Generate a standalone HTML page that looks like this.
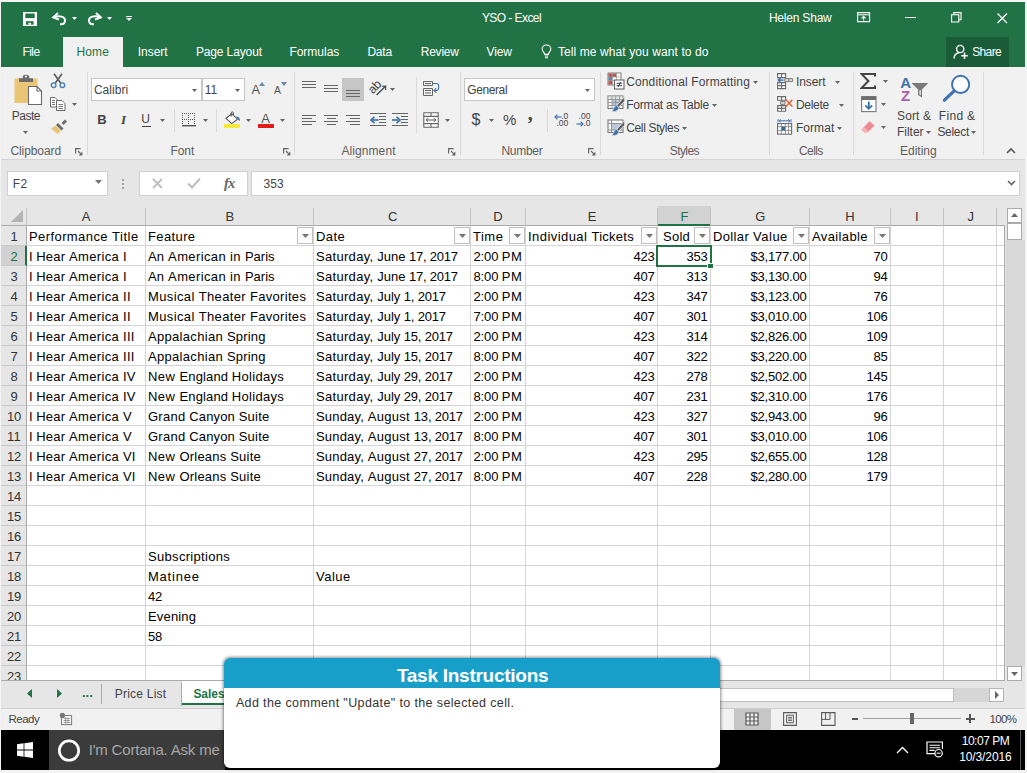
<!DOCTYPE html>
<html lang="en"><head><meta charset="utf-8"><title>YSO - Excel</title><style>
html,body{margin:0;padding:0}
body{width:1027px;height:773px;position:relative;overflow:hidden;background:#e6e6e6;font-family:"Liberation Sans",Arial,sans-serif}
.a{position:absolute;display:block}
.t{position:absolute;white-space:pre;line-height:20px;height:20px}
</style></head>
<body>
<div class="a" style="left:0px;top:0px;width:1027px;height:773px;background:#f4f4f4;"></div>
<div class="a" style="left:1px;top:2px;width:1024px;height:65px;background:#217346;"></div>
<div class="a" style="left:1px;top:67px;width:1024px;height:93px;background:#f1f1f1;"></div>
<div class="a" style="left:1px;top:159px;width:1024px;height:1px;background:#d4d4d4;"></div>
<div class="a" style="left:1px;top:160px;width:1024px;height:46px;background:#e6e6e6;"></div>
<div class="a" style="left:1px;top:206px;width:1024px;height:475px;background:#e6e6e6;"></div>
<div class="a" style="left:1px;top:681px;width:1024px;height:28px;background:#e6e6e6;"></div>
<div class="a" style="left:1px;top:709px;width:1024px;height:21px;background:#f1f1f1;"></div>
<div class="a" style="left:1px;top:708.3px;width:1024px;height:1px;background:#cfcfcf;"></div>
<div class="a" style="left:1px;top:730px;width:1024px;height:40px;background:#000;"></div>
<div class="a" style="left:1020px;top:730px;width:1px;height:40px;background:#555;"></div>
<span class="t" style="left:481.90px;top:8.00px;font-size:12px;color:#fff;letter-spacing:-0.560px;">YSO - Excel</span>
<span class="t" style="left:768.90px;top:8.00px;font-size:12px;color:#fff;letter-spacing:-0.202px;">Helen Shaw</span>
<div class="a" style="left:63px;top:37px;width:60px;height:31px;background:#f1f1f1;"></div>
<span class="t" style="left:22.40px;top:42.00px;font-size:12px;color:#fff;letter-spacing:-0.536px;">File</span>
<span class="t" style="left:76.40px;top:42.00px;font-size:12px;color:#217346;letter-spacing:0.146px;">Home</span>
<span class="t" style="left:137.70px;top:42.00px;font-size:12px;color:#fff;letter-spacing:-0.019px;">Insert</span>
<span class="t" style="left:195.90px;top:42.00px;font-size:12px;color:#fff;letter-spacing:-0.126px;">Page Layout</span>
<span class="t" style="left:289.40px;top:42.00px;font-size:12px;color:#fff;letter-spacing:-0.014px;">Formulas</span>
<span class="t" style="left:367.40px;top:42.00px;font-size:12px;color:#fff;letter-spacing:-0.190px;">Data</span>
<span class="t" style="left:420.70px;top:42.00px;font-size:12px;color:#fff;letter-spacing:-0.210px;">Review</span>
<span class="t" style="left:486.40px;top:42.00px;font-size:12px;color:#fff;letter-spacing:-0.049px;">View</span>
<span class="t" style="left:557.90px;top:42.00px;font-size:12px;color:#fff;letter-spacing:0.097px;">Tell me what you want to do</span>
<div class="a" style="left:946px;top:37px;width:63px;height:30px;background:#1a5c38;"></div>
<span class="t" style="left:972.20px;top:42.00px;font-size:12px;color:#fff;letter-spacing:-0.626px;">Share</span>
<div class="a" style="left:87px;top:72px;width:1px;height:83px;background:#dadada;"></div>
<div class="a" style="left:293.5px;top:72px;width:1px;height:83px;background:#dadada;"></div>
<div class="a" style="left:459.5px;top:72px;width:1px;height:83px;background:#dadada;"></div>
<div class="a" style="left:599.5px;top:72px;width:1px;height:83px;background:#dadada;"></div>
<div class="a" style="left:769px;top:72px;width:1px;height:83px;background:#dadada;"></div>
<div class="a" style="left:853px;top:72px;width:1px;height:83px;background:#dadada;"></div>
<div class="a" style="left:983px;top:72px;width:1px;height:83px;background:#dadada;"></div>
<span class="t" style="left:10.40px;top:141.00px;font-size:12px;color:#5e5e5e;letter-spacing:-0.075px;">Clipboard</span>
<span class="t" style="left:170.40px;top:141.00px;font-size:12px;color:#5e5e5e;letter-spacing:-0.029px;">Font</span>
<span class="t" style="left:341.40px;top:141.00px;font-size:12px;color:#5e5e5e;letter-spacing:0.092px;">Alignment</span>
<span class="t" style="left:501.40px;top:141.00px;font-size:12px;color:#5e5e5e;letter-spacing:-0.281px;">Number</span>
<span class="t" style="left:669.80px;top:141.00px;font-size:12px;color:#5e5e5e;letter-spacing:-0.598px;">Styles</span>
<span class="t" style="left:799.00px;top:141.00px;font-size:12px;color:#5e5e5e;letter-spacing:-0.594px;">Cells</span>
<span class="t" style="left:900.00px;top:141.00px;font-size:12px;color:#5e5e5e;">Editing</span>
<span class="t" style="left:11.70px;top:106.00px;font-size:12px;color:#444;letter-spacing:-0.478px;">Paste</span>
<svg class="a" style="left:23.0px;top:130.5px" width="5" height="3" viewBox="0 0 5 3"><path d="M0 0H5L2.5 3Z" fill="#666"/></svg>
<svg class="a" style="left:72.0px;top:102.5px" width="5" height="3" viewBox="0 0 5 3"><path d="M0 0H5L2.5 3Z" fill="#666"/></svg>
<div class="a" style="left:91px;top:78px;width:111px;height:23px;background:#fff;border:1px solid #c6c6c6;box-sizing:border-box;"></div>
<div class="a" style="left:202px;top:78px;width:43px;height:23px;background:#fff;border:1px solid #c6c6c6;box-sizing:border-box;"></div>
<span class="t" style="left:93.90px;top:80.00px;font-size:12px;color:#444;letter-spacing:0.055px;">Calibri</span>
<span class="t" style="left:204.70px;top:80.00px;font-size:12px;color:#444;">11</span>
<svg class="a" style="left:192.0px;top:89.0px" width="5" height="3" viewBox="0 0 5 3"><path d="M0 0H5L2.5 3Z" fill="#666"/></svg>
<svg class="a" style="left:235.0px;top:89.0px" width="5" height="3" viewBox="0 0 5 3"><path d="M0 0H5L2.5 3Z" fill="#666"/></svg>
<span class="t" style="left:97.20px;top:110.00px;font-size:13px;color:#444;font-weight:bold;letter-spacing:-0.791px;">B</span>
<span class="t" style="left:120.90px;top:110.00px;font-size:13px;color:#444;font-weight:bold;font-style:italic;font-family:'Liberation Serif', serif;letter-spacing:1.638px;">I</span>
<span class="t" style="left:141.20px;top:109.00px;font-size:12px;color:#444;letter-spacing:0.728px;">U</span>
<div class="a" style="left:141.5px;top:125.6px;width:9px;height:1.1px;background:#444;"></div>
<svg class="a" style="left:159.5px;top:119.0px" width="5" height="3" viewBox="0 0 5 3"><path d="M0 0H5L2.5 3Z" fill="#666"/></svg>
<div class="a" style="left:173.5px;top:109px;width:1px;height:23px;background:#dadada;"></div>
<svg class="a" style="left:202.5px;top:119.0px" width="5" height="3" viewBox="0 0 5 3"><path d="M0 0H5L2.5 3Z" fill="#666"/></svg>
<div class="a" style="left:216px;top:109px;width:1px;height:23px;background:#dadada;"></div>
<svg class="a" style="left:246.0px;top:119.0px" width="5" height="3" viewBox="0 0 5 3"><path d="M0 0H5L2.5 3Z" fill="#666"/></svg>
<svg class="a" style="left:280.0px;top:119.0px" width="5" height="3" viewBox="0 0 5 3"><path d="M0 0H5L2.5 3Z" fill="#666"/></svg>
<div class="a" style="left:342px;top:78px;width:22px;height:23px;background:#c6c6c6;"></div>
<svg class="a" style="left:390.0px;top:87.8px" width="5" height="3" viewBox="0 0 5 3"><path d="M0 0H5L2.5 3Z" fill="#666"/></svg>
<div class="a" style="left:415.5px;top:77px;width:1px;height:56px;background:#dadada;"></div>
<svg class="a" style="left:445.0px;top:119.0px" width="5" height="3" viewBox="0 0 5 3"><path d="M0 0H5L2.5 3Z" fill="#666"/></svg>
<div class="a" style="left:464px;top:78px;width:131px;height:23px;background:#fff;border:1px solid #c6c6c6;box-sizing:border-box;"></div>
<span class="t" style="left:467.20px;top:80.00px;font-size:12px;color:#444;letter-spacing:-0.386px;">General</span>
<svg class="a" style="left:585.0px;top:89.0px" width="5" height="3" viewBox="0 0 5 3"><path d="M0 0H5L2.5 3Z" fill="#666"/></svg>
<span class="t" style="left:471.40px;top:110.00px;font-size:16px;color:#444;letter-spacing:-0.206px;">$</span>
<svg class="a" style="left:489.0px;top:119.0px" width="5" height="3" viewBox="0 0 5 3"><path d="M0 0H5L2.5 3Z" fill="#666"/></svg>
<span class="t" style="left:502.90px;top:110.00px;font-size:15px;color:#444;letter-spacing:0.356px;">%</span>
<span class="t" style="left:527.70px;top:103.00px;font-size:20px;color:#444;font-weight:bold;font-family:'Liberation Serif', serif;letter-spacing:0.400px;">,</span>
<div class="a" style="left:546.5px;top:109px;width:1px;height:23px;background:#dadada;"></div>
<span class="t" style="left:626.20px;top:72.00px;font-size:12px;color:#444;letter-spacing:0.139px;">Conditional Formatting</span>
<svg class="a" style="left:753.0px;top:81.0px" width="5" height="3" viewBox="0 0 5 3"><path d="M0 0H5L2.5 3Z" fill="#666"/></svg>
<span class="t" style="left:626.20px;top:94.70px;font-size:12px;color:#444;letter-spacing:-0.202px;">Format as Table</span>
<svg class="a" style="left:711.5px;top:103.5px" width="5" height="3" viewBox="0 0 5 3"><path d="M0 0H5L2.5 3Z" fill="#666"/></svg>
<span class="t" style="left:626.20px;top:117.50px;font-size:12px;color:#444;letter-spacing:-0.344px;">Cell Styles</span>
<svg class="a" style="left:681.5px;top:126.5px" width="5" height="3" viewBox="0 0 5 3"><path d="M0 0H5L2.5 3Z" fill="#666"/></svg>
<span class="t" style="left:795.90px;top:72.00px;font-size:12px;color:#444;letter-spacing:-0.069px;">Insert</span>
<svg class="a" style="left:834.8px;top:81.0px" width="5" height="3" viewBox="0 0 5 3"><path d="M0 0H5L2.5 3Z" fill="#666"/></svg>
<span class="t" style="left:795.90px;top:94.70px;font-size:12px;color:#444;letter-spacing:-0.265px;">Delete</span>
<svg class="a" style="left:838.5px;top:103.5px" width="5" height="3" viewBox="0 0 5 3"><path d="M0 0H5L2.5 3Z" fill="#666"/></svg>
<span class="t" style="left:795.90px;top:117.50px;font-size:12px;color:#444;letter-spacing:0.064px;">Format</span>
<svg class="a" style="left:836.5px;top:126.5px" width="5" height="3" viewBox="0 0 5 3"><path d="M0 0H5L2.5 3Z" fill="#666"/></svg>
<svg class="a" style="left:882.7px;top:79.5px" width="5" height="3" viewBox="0 0 5 3"><path d="M0 0H5L2.5 3Z" fill="#666"/></svg>
<svg class="a" style="left:880.8px;top:102.5px" width="5" height="3" viewBox="0 0 5 3"><path d="M0 0H5L2.5 3Z" fill="#666"/></svg>
<svg class="a" style="left:880.8px;top:126.0px" width="5" height="3" viewBox="0 0 5 3"><path d="M0 0H5L2.5 3Z" fill="#666"/></svg>
<span class="t" style="left:897.00px;top:105.50px;font-size:12px;color:#444;letter-spacing:0.123px;">Sort &amp;</span>
<span class="t" style="left:897.00px;top:121.80px;font-size:12px;color:#444;letter-spacing:-0.029px;">Filter</span>
<svg class="a" style="left:925.8px;top:130.8px" width="5" height="3" viewBox="0 0 5 3"><path d="M0 0H5L2.5 3Z" fill="#666"/></svg>
<span class="t" style="left:938.80px;top:105.50px;font-size:12px;color:#444;letter-spacing:0.319px;">Find &amp;</span>
<span class="t" style="left:937.40px;top:121.80px;font-size:12px;color:#444;letter-spacing:-0.293px;">Select</span>
<svg class="a" style="left:971.0px;top:130.8px" width="5" height="3" viewBox="0 0 5 3"><path d="M0 0H5L2.5 3Z" fill="#666"/></svg>
<div class="a" style="left:6.5px;top:170.5px;width:101px;height:25.5px;background:#fff;border:1px solid #d0d0d0;box-sizing:border-box;"></div>
<span class="t" style="left:12.70px;top:173.50px;font-size:12px;color:#444;letter-spacing:0.392px;">F2</span>
<svg class="a" style="left:94.5px;top:180.0px" width="7" height="4" viewBox="0 0 7 4"><path d="M0 0H7L3.5 4Z" fill="#777"/></svg>
<div class="a" style="left:122.3px;top:178.5px;width:2px;height:2px;background:#a6a6a6;"></div>
<div class="a" style="left:122.3px;top:182.5px;width:2px;height:2px;background:#a6a6a6;"></div>
<div class="a" style="left:122.3px;top:186.5px;width:2px;height:2px;background:#a6a6a6;"></div>
<div class="a" style="left:138.5px;top:170.5px;width:109.5px;height:25.5px;background:#fff;border:1px solid #d0d0d0;box-sizing:border-box;"></div>
<div class="a" style="left:251px;top:170.5px;width:769px;height:25.5px;background:#fff;border:1px solid #d0d0d0;box-sizing:border-box;"></div>
<span class="t" style="left:263.40px;top:173.50px;font-size:12px;color:#444;letter-spacing:0.190px;">353</span>
<span class="t" style="left:223.90px;top:172.50px;font-size:14.5px;color:#666;font-weight:bold;font-style:italic;font-family:'Liberation Serif', serif;letter-spacing:-0.597px;">fx</span>
<svg class="a" style="left:151.5px;top:177.5px" width="11" height="11" viewBox="0 0 11 11"><path d="M1 1L10 10M10 1L1 10" stroke="#bdbdbd" stroke-width="1.8" fill="none"/></svg>
<svg class="a" style="left:186.5px;top:177px" width="14" height="12" viewBox="0 0 14 12"><path d="M1 6.5L5 10.5L13 1.5" stroke="#bdbdbd" stroke-width="2" fill="none"/></svg>
<svg class="a" style="left:1006.5px;top:180px" width="9" height="6" viewBox="0 0 9 6"><path d="M1 1L4.5 4.5L8 1" stroke="#666" stroke-width="1.6" fill="none"/></svg>
<div class="a" style="left:26px;top:226px;width:978px;height:454.5px;background:#fff;"></div>
<div class="a" style="left:26px;top:245px;width:978px;height:1px;background:#d4d4d4;"></div>
<div class="a" style="left:26px;top:265px;width:978px;height:1px;background:#d4d4d4;"></div>
<div class="a" style="left:26px;top:285px;width:978px;height:1px;background:#d4d4d4;"></div>
<div class="a" style="left:26px;top:305px;width:978px;height:1px;background:#d4d4d4;"></div>
<div class="a" style="left:26px;top:325px;width:978px;height:1px;background:#d4d4d4;"></div>
<div class="a" style="left:26px;top:345px;width:978px;height:1px;background:#d4d4d4;"></div>
<div class="a" style="left:26px;top:365px;width:978px;height:1px;background:#d4d4d4;"></div>
<div class="a" style="left:26px;top:385px;width:978px;height:1px;background:#d4d4d4;"></div>
<div class="a" style="left:26px;top:405px;width:978px;height:1px;background:#d4d4d4;"></div>
<div class="a" style="left:26px;top:425px;width:978px;height:1px;background:#d4d4d4;"></div>
<div class="a" style="left:26px;top:445px;width:978px;height:1px;background:#d4d4d4;"></div>
<div class="a" style="left:26px;top:465px;width:978px;height:1px;background:#d4d4d4;"></div>
<div class="a" style="left:26px;top:485px;width:978px;height:1px;background:#d4d4d4;"></div>
<div class="a" style="left:26px;top:505px;width:978px;height:1px;background:#d4d4d4;"></div>
<div class="a" style="left:26px;top:525px;width:978px;height:1px;background:#d4d4d4;"></div>
<div class="a" style="left:26px;top:545px;width:978px;height:1px;background:#d4d4d4;"></div>
<div class="a" style="left:26px;top:565px;width:978px;height:1px;background:#d4d4d4;"></div>
<div class="a" style="left:26px;top:585px;width:978px;height:1px;background:#d4d4d4;"></div>
<div class="a" style="left:26px;top:605px;width:978px;height:1px;background:#d4d4d4;"></div>
<div class="a" style="left:26px;top:625px;width:978px;height:1px;background:#d4d4d4;"></div>
<div class="a" style="left:26px;top:645px;width:978px;height:1px;background:#d4d4d4;"></div>
<div class="a" style="left:26px;top:665px;width:978px;height:1px;background:#d4d4d4;"></div>
<div class="a" style="left:145px;top:226px;width:1px;height:454.5px;background:#d4d4d4;"></div>
<div class="a" style="left:313px;top:226px;width:1px;height:454.5px;background:#d4d4d4;"></div>
<div class="a" style="left:470px;top:226px;width:1px;height:454.5px;background:#d4d4d4;"></div>
<div class="a" style="left:525px;top:226px;width:1px;height:454.5px;background:#d4d4d4;"></div>
<div class="a" style="left:657px;top:226px;width:1px;height:454.5px;background:#d4d4d4;"></div>
<div class="a" style="left:710px;top:226px;width:1px;height:454.5px;background:#d4d4d4;"></div>
<div class="a" style="left:809px;top:226px;width:1px;height:454.5px;background:#d4d4d4;"></div>
<div class="a" style="left:890px;top:226px;width:1px;height:454.5px;background:#d4d4d4;"></div>
<div class="a" style="left:943px;top:226px;width:1px;height:454.5px;background:#d4d4d4;"></div>
<div class="a" style="left:996px;top:226px;width:1px;height:454.5px;background:#d4d4d4;"></div>
<div class="a" style="left:1004px;top:225px;width:1px;height:455.5px;background:#ababab;"></div>
<div class="a" style="left:1px;top:206px;width:1003px;height:20px;background:#e6e6e6;"></div>
<div class="a" style="left:657.5px;top:206px;width:53px;height:20px;background:#d2d2d2;"></div>
<div class="a" style="left:1px;top:225px;width:1003px;height:1px;background:#ababab;"></div>
<div class="a" style="left:657.5px;top:224px;width:53px;height:2px;background:#217346;"></div>
<div class="a" style="left:145px;top:208px;width:1px;height:18px;background:#c0c0c0;"></div>
<div class="a" style="left:313px;top:208px;width:1px;height:18px;background:#c0c0c0;"></div>
<div class="a" style="left:470px;top:208px;width:1px;height:18px;background:#c0c0c0;"></div>
<div class="a" style="left:525px;top:208px;width:1px;height:18px;background:#c0c0c0;"></div>
<div class="a" style="left:657px;top:208px;width:1px;height:18px;background:#c0c0c0;"></div>
<div class="a" style="left:710px;top:208px;width:1px;height:18px;background:#c0c0c0;"></div>
<div class="a" style="left:809px;top:208px;width:1px;height:18px;background:#c0c0c0;"></div>
<div class="a" style="left:890px;top:208px;width:1px;height:18px;background:#c0c0c0;"></div>
<div class="a" style="left:943px;top:208px;width:1px;height:18px;background:#c0c0c0;"></div>
<div class="a" style="left:996px;top:208px;width:1px;height:18px;background:#c0c0c0;"></div>
<div class="a" style="left:26px;top:208px;width:1px;height:18px;background:#c0c0c0;"></div>
<span class="t" style="left:81.63px;top:206.50px;font-size:13px;color:#333;letter-spacing:0.069px;">A</span>
<span class="t" style="left:225.39px;top:206.50px;font-size:13px;color:#333;letter-spacing:-0.454px;">B</span>
<span class="t" style="left:387.97px;top:206.50px;font-size:13px;color:#333;letter-spacing:-1.336px;">C</span>
<span class="t" style="left:493.35px;top:206.50px;font-size:13px;color:#333;letter-spacing:-0.096px;">D</span>
<span class="t" style="left:587.81px;top:206.50px;font-size:13px;color:#333;letter-spacing:-1.295px;">E</span>
<span class="t" style="left:680.53px;top:206.50px;font-size:13px;color:#217346;letter-spacing:-1.012px;">F</span>
<span class="t" style="left:755.23px;top:206.50px;font-size:13px;color:#333;letter-spacing:-0.595px;">G</span>
<span class="t" style="left:845.29px;top:206.50px;font-size:13px;color:#333;letter-spacing:0.022px;">H</span>
<span class="t" style="left:915.10px;top:206.50px;font-size:13px;color:#333;letter-spacing:0.181px;">I</span>
<span class="t" style="left:967.59px;top:206.50px;font-size:13px;color:#333;letter-spacing:-1.683px;">J</span>
<svg class="a" style="left:11px;top:209px" width="13" height="14" viewBox="0 0 13 14"><path d="M12 1V13H0Z" fill="#b4b4b4"/></svg>
<div class="a" style="left:1px;top:226px;width:25px;height:454.5px;background:#e6e6e6;"></div>
<div class="a" style="left:26px;top:226px;width:1px;height:454.5px;background:#ababab;"></div>
<div class="a" style="left:1px;top:246px;width:25px;height:19px;background:#d2d2d2;"></div>
<div class="a" style="left:25px;top:246px;width:2px;height:20px;background:#217346;"></div>
<div class="a" style="left:1px;top:245px;width:25px;height:1px;background:#c8c8c8;"></div>
<div class="a" style="left:1px;top:265px;width:25px;height:1px;background:#c8c8c8;"></div>
<div class="a" style="left:1px;top:285px;width:25px;height:1px;background:#c8c8c8;"></div>
<div class="a" style="left:1px;top:305px;width:25px;height:1px;background:#c8c8c8;"></div>
<div class="a" style="left:1px;top:325px;width:25px;height:1px;background:#c8c8c8;"></div>
<div class="a" style="left:1px;top:345px;width:25px;height:1px;background:#c8c8c8;"></div>
<div class="a" style="left:1px;top:365px;width:25px;height:1px;background:#c8c8c8;"></div>
<div class="a" style="left:1px;top:385px;width:25px;height:1px;background:#c8c8c8;"></div>
<div class="a" style="left:1px;top:405px;width:25px;height:1px;background:#c8c8c8;"></div>
<div class="a" style="left:1px;top:425px;width:25px;height:1px;background:#c8c8c8;"></div>
<div class="a" style="left:1px;top:445px;width:25px;height:1px;background:#c8c8c8;"></div>
<div class="a" style="left:1px;top:465px;width:25px;height:1px;background:#c8c8c8;"></div>
<div class="a" style="left:1px;top:485px;width:25px;height:1px;background:#c8c8c8;"></div>
<div class="a" style="left:1px;top:505px;width:25px;height:1px;background:#c8c8c8;"></div>
<div class="a" style="left:1px;top:525px;width:25px;height:1px;background:#c8c8c8;"></div>
<div class="a" style="left:1px;top:545px;width:25px;height:1px;background:#c8c8c8;"></div>
<div class="a" style="left:1px;top:565px;width:25px;height:1px;background:#c8c8c8;"></div>
<div class="a" style="left:1px;top:585px;width:25px;height:1px;background:#c8c8c8;"></div>
<div class="a" style="left:1px;top:605px;width:25px;height:1px;background:#c8c8c8;"></div>
<div class="a" style="left:1px;top:625px;width:25px;height:1px;background:#c8c8c8;"></div>
<div class="a" style="left:1px;top:645px;width:25px;height:1px;background:#c8c8c8;"></div>
<div class="a" style="left:1px;top:665px;width:25px;height:1px;background:#c8c8c8;"></div>
<span class="t" style="left:10.50px;top:226.50px;font-size:13px;color:#333;letter-spacing:-0.234px;">1</span>
<span class="t" style="left:10.50px;top:246.50px;font-size:13px;color:#217346;letter-spacing:-0.234px;">2</span>
<span class="t" style="left:10.50px;top:266.50px;font-size:13px;color:#333;letter-spacing:-0.234px;">3</span>
<span class="t" style="left:10.50px;top:286.50px;font-size:13px;color:#333;letter-spacing:-0.234px;">4</span>
<span class="t" style="left:10.50px;top:306.50px;font-size:13px;color:#333;letter-spacing:-0.234px;">5</span>
<span class="t" style="left:10.50px;top:326.50px;font-size:13px;color:#333;letter-spacing:-0.234px;">6</span>
<span class="t" style="left:10.50px;top:346.50px;font-size:13px;color:#333;letter-spacing:-0.234px;">7</span>
<span class="t" style="left:10.50px;top:366.50px;font-size:13px;color:#333;letter-spacing:-0.234px;">8</span>
<span class="t" style="left:10.50px;top:386.50px;font-size:13px;color:#333;letter-spacing:-0.234px;">9</span>
<span class="t" style="left:7.00px;top:406.50px;font-size:13px;color:#333;letter-spacing:-0.234px;">10</span>
<span class="t" style="left:7.00px;top:426.50px;font-size:13px;color:#333;letter-spacing:0.250px;">11</span>
<span class="t" style="left:7.00px;top:446.50px;font-size:13px;color:#333;letter-spacing:-0.234px;">12</span>
<span class="t" style="left:7.00px;top:466.50px;font-size:13px;color:#333;letter-spacing:-0.234px;">13</span>
<span class="t" style="left:7.00px;top:486.50px;font-size:13px;color:#333;letter-spacing:-0.234px;">14</span>
<span class="t" style="left:7.00px;top:506.50px;font-size:13px;color:#333;letter-spacing:-0.234px;">15</span>
<span class="t" style="left:7.00px;top:526.50px;font-size:13px;color:#333;letter-spacing:-0.234px;">16</span>
<span class="t" style="left:7.00px;top:546.50px;font-size:13px;color:#333;letter-spacing:-0.234px;">17</span>
<span class="t" style="left:7.00px;top:566.50px;font-size:13px;color:#333;letter-spacing:-0.234px;">18</span>
<span class="t" style="left:7.00px;top:586.50px;font-size:13px;color:#333;letter-spacing:-0.234px;">19</span>
<span class="t" style="left:7.00px;top:606.50px;font-size:13px;color:#333;letter-spacing:-0.234px;">20</span>
<span class="t" style="left:7.00px;top:626.50px;font-size:13px;color:#333;letter-spacing:-0.234px;">21</span>
<span class="t" style="left:7.00px;top:646.50px;font-size:13px;color:#333;letter-spacing:-0.234px;">22</span>
<span class="t" style="left:7.00px;top:666.50px;font-size:13px;color:#333;letter-spacing:-0.234px;">23</span>
<span class="t" style="left:29.00px;top:226.50px;font-size:13px;color:#000;letter-spacing:0.411px;">Performance </span>
<span class="t" style="left:111.98px;top:226.50px;font-size:13px;color:#000;letter-spacing:0.559px;">Title</span>
<span class="t" style="left:148.00px;top:226.50px;font-size:13px;color:#000;letter-spacing:0.380px;">Feature</span>
<span class="t" style="left:316.00px;top:226.50px;font-size:13px;color:#000;letter-spacing:0.410px;">Date</span>
<span class="t" style="left:473.00px;top:226.50px;font-size:13px;color:#000;letter-spacing:0.502px;">Time</span>
<span class="t" style="left:528.00px;top:226.50px;font-size:13px;color:#000;letter-spacing:0.443px;">Individual </span>
<span class="t" style="left:591.41px;top:226.50px;font-size:13px;color:#000;letter-spacing:0.267px;">Tickets</span>
<span class="t" style="left:663.10px;top:226.50px;font-size:13px;color:#000;letter-spacing:0.192px;">Sold</span>
<span class="t" style="left:713.00px;top:226.50px;font-size:13px;color:#000;letter-spacing:0.360px;">Dollar </span>
<span class="t" style="left:753.10px;top:226.50px;font-size:13px;color:#000;letter-spacing:0.486px;">Value</span>
<span class="t" style="left:812.00px;top:226.50px;font-size:13px;color:#000;letter-spacing:0.373px;">Available</span>
<span class="t" style="left:29.00px;top:246.50px;font-size:13px;color:#000;letter-spacing:-0.014px;">I </span>
<span class="t" style="left:36.21px;top:246.50px;font-size:13px;color:#000;letter-spacing:0.207px;">Hear </span>
<span class="t" style="left:69.04px;top:246.50px;font-size:13px;color:#000;letter-spacing:0.348px;">America </span>
<span class="t" style="left:123.12px;top:246.50px;font-size:13px;color:#000;letter-spacing:0.181px;">I</span>
<span class="t" style="left:148.00px;top:246.50px;font-size:13px;color:#000;letter-spacing:0.188px;">An </span>
<span class="t" style="left:168.08px;top:246.50px;font-size:13px;color:#000;letter-spacing:0.388px;">American </span>
<span class="t" style="left:230.10px;top:246.50px;font-size:13px;color:#000;letter-spacing:0.357px;">in </span>
<span class="t" style="left:244.90px;top:246.50px;font-size:13px;color:#000;letter-spacing:0.012px;">Paris</span>
<span class="t" style="left:316.00px;top:246.50px;font-size:13px;color:#000;letter-spacing:0.306px;">Saturday, </span>
<span class="t" style="left:377.35px;top:246.50px;font-size:13px;color:#000;letter-spacing:-0.041px;">June </span>
<span class="t" style="left:408.96px;top:246.50px;font-size:13px;color:#000;letter-spacing:-0.197px;">17, </span>
<span class="t" style="left:429.86px;top:246.50px;font-size:13px;color:#000;letter-spacing:-0.230px;">2017</span>
<span class="t" style="left:473.48px;top:246.50px;font-size:13px;color:#000;letter-spacing:-0.124px;">2:00 </span>
<span class="t" style="left:501.78px;top:246.50px;font-size:13px;color:#000;letter-spacing:0.610px;">PM</span>
<span class="t" style="left:633.50px;top:246.50px;font-size:13px;color:#000;letter-spacing:-0.234px;">423</span>
<span class="t" style="left:686.50px;top:246.50px;font-size:13px;color:#000;letter-spacing:-0.234px;">353</span>
<span class="t" style="left:750.50px;top:246.50px;font-size:13px;color:#000;letter-spacing:-0.205px;">$3,177.00</span>
<span class="t" style="left:873.50px;top:246.50px;font-size:13px;color:#000;letter-spacing:-0.234px;">70</span>
<span class="t" style="left:29.00px;top:266.50px;font-size:13px;color:#000;letter-spacing:-0.014px;">I </span>
<span class="t" style="left:36.21px;top:266.50px;font-size:13px;color:#000;letter-spacing:0.207px;">Hear </span>
<span class="t" style="left:69.04px;top:266.50px;font-size:13px;color:#000;letter-spacing:0.348px;">America </span>
<span class="t" style="left:123.12px;top:266.50px;font-size:13px;color:#000;letter-spacing:0.181px;">I</span>
<span class="t" style="left:148.00px;top:266.50px;font-size:13px;color:#000;letter-spacing:0.188px;">An </span>
<span class="t" style="left:168.08px;top:266.50px;font-size:13px;color:#000;letter-spacing:0.388px;">American </span>
<span class="t" style="left:230.10px;top:266.50px;font-size:13px;color:#000;letter-spacing:0.357px;">in </span>
<span class="t" style="left:244.90px;top:266.50px;font-size:13px;color:#000;letter-spacing:0.012px;">Paris</span>
<span class="t" style="left:316.00px;top:266.50px;font-size:13px;color:#000;letter-spacing:0.306px;">Saturday, </span>
<span class="t" style="left:377.35px;top:266.50px;font-size:13px;color:#000;letter-spacing:-0.041px;">June </span>
<span class="t" style="left:408.96px;top:266.50px;font-size:13px;color:#000;letter-spacing:-0.197px;">17, </span>
<span class="t" style="left:429.86px;top:266.50px;font-size:13px;color:#000;letter-spacing:-0.230px;">2017</span>
<span class="t" style="left:473.48px;top:266.50px;font-size:13px;color:#000;letter-spacing:-0.124px;">8:00 </span>
<span class="t" style="left:501.78px;top:266.50px;font-size:13px;color:#000;letter-spacing:0.610px;">PM</span>
<span class="t" style="left:633.50px;top:266.50px;font-size:13px;color:#000;letter-spacing:-0.234px;">407</span>
<span class="t" style="left:686.50px;top:266.50px;font-size:13px;color:#000;letter-spacing:-0.234px;">313</span>
<span class="t" style="left:750.50px;top:266.50px;font-size:13px;color:#000;letter-spacing:-0.205px;">$3,130.00</span>
<span class="t" style="left:873.50px;top:266.50px;font-size:13px;color:#000;letter-spacing:-0.234px;">94</span>
<span class="t" style="left:29.00px;top:286.50px;font-size:13px;color:#000;letter-spacing:-0.014px;">I </span>
<span class="t" style="left:36.21px;top:286.50px;font-size:13px;color:#000;letter-spacing:0.207px;">Hear </span>
<span class="t" style="left:69.04px;top:286.50px;font-size:13px;color:#000;letter-spacing:0.348px;">America </span>
<span class="t" style="left:123.12px;top:286.50px;font-size:13px;color:#000;letter-spacing:0.189px;">II</span>
<span class="t" style="left:148.00px;top:286.50px;font-size:13px;color:#000;letter-spacing:0.379px;">Musical </span>
<span class="t" style="left:198.72px;top:286.50px;font-size:13px;color:#000;letter-spacing:0.359px;">Theater </span>
<span class="t" style="left:250.02px;top:286.50px;font-size:13px;color:#000;letter-spacing:0.302px;">Favorites</span>
<span class="t" style="left:316.00px;top:286.50px;font-size:13px;color:#000;letter-spacing:0.306px;">Saturday, </span>
<span class="t" style="left:377.35px;top:286.50px;font-size:13px;color:#000;letter-spacing:-0.055px;">July </span>
<span class="t" style="left:403.81px;top:286.50px;font-size:13px;color:#000;letter-spacing:-0.190px;">1, </span>
<span class="t" style="left:417.71px;top:286.50px;font-size:13px;color:#000;letter-spacing:-0.230px;">2017</span>
<span class="t" style="left:473.48px;top:286.50px;font-size:13px;color:#000;letter-spacing:-0.124px;">2:00 </span>
<span class="t" style="left:501.78px;top:286.50px;font-size:13px;color:#000;letter-spacing:0.610px;">PM</span>
<span class="t" style="left:633.50px;top:286.50px;font-size:13px;color:#000;letter-spacing:-0.234px;">423</span>
<span class="t" style="left:686.50px;top:286.50px;font-size:13px;color:#000;letter-spacing:-0.234px;">347</span>
<span class="t" style="left:750.50px;top:286.50px;font-size:13px;color:#000;letter-spacing:-0.205px;">$3,123.00</span>
<span class="t" style="left:873.50px;top:286.50px;font-size:13px;color:#000;letter-spacing:-0.234px;">76</span>
<span class="t" style="left:29.00px;top:306.50px;font-size:13px;color:#000;letter-spacing:-0.014px;">I </span>
<span class="t" style="left:36.21px;top:306.50px;font-size:13px;color:#000;letter-spacing:0.207px;">Hear </span>
<span class="t" style="left:69.04px;top:306.50px;font-size:13px;color:#000;letter-spacing:0.348px;">America </span>
<span class="t" style="left:123.12px;top:306.50px;font-size:13px;color:#000;letter-spacing:0.189px;">II</span>
<span class="t" style="left:148.00px;top:306.50px;font-size:13px;color:#000;letter-spacing:0.379px;">Musical </span>
<span class="t" style="left:198.72px;top:306.50px;font-size:13px;color:#000;letter-spacing:0.359px;">Theater </span>
<span class="t" style="left:250.02px;top:306.50px;font-size:13px;color:#000;letter-spacing:0.302px;">Favorites</span>
<span class="t" style="left:316.00px;top:306.50px;font-size:13px;color:#000;letter-spacing:0.306px;">Saturday, </span>
<span class="t" style="left:377.35px;top:306.50px;font-size:13px;color:#000;letter-spacing:-0.055px;">July </span>
<span class="t" style="left:403.81px;top:306.50px;font-size:13px;color:#000;letter-spacing:-0.190px;">1, </span>
<span class="t" style="left:417.71px;top:306.50px;font-size:13px;color:#000;letter-spacing:-0.230px;">2017</span>
<span class="t" style="left:473.48px;top:306.50px;font-size:13px;color:#000;letter-spacing:-0.124px;">7:00 </span>
<span class="t" style="left:501.78px;top:306.50px;font-size:13px;color:#000;letter-spacing:0.610px;">PM</span>
<span class="t" style="left:633.50px;top:306.50px;font-size:13px;color:#000;letter-spacing:-0.234px;">407</span>
<span class="t" style="left:686.50px;top:306.50px;font-size:13px;color:#000;letter-spacing:-0.234px;">301</span>
<span class="t" style="left:750.50px;top:306.50px;font-size:13px;color:#000;letter-spacing:-0.205px;">$3,010.00</span>
<span class="t" style="left:866.50px;top:306.50px;font-size:13px;color:#000;letter-spacing:-0.234px;">106</span>
<span class="t" style="left:29.00px;top:326.50px;font-size:13px;color:#000;letter-spacing:-0.014px;">I </span>
<span class="t" style="left:36.21px;top:326.50px;font-size:13px;color:#000;letter-spacing:0.207px;">Hear </span>
<span class="t" style="left:69.04px;top:326.50px;font-size:13px;color:#000;letter-spacing:0.348px;">America </span>
<span class="t" style="left:123.12px;top:326.50px;font-size:13px;color:#000;letter-spacing:0.192px;">III</span>
<span class="t" style="left:148.00px;top:326.50px;font-size:13px;color:#000;letter-spacing:0.312px;">Appalachian </span>
<span class="t" style="left:226.92px;top:326.50px;font-size:13px;color:#000;letter-spacing:0.180px;">Spring</span>
<span class="t" style="left:316.00px;top:326.50px;font-size:13px;color:#000;letter-spacing:0.306px;">Saturday, </span>
<span class="t" style="left:377.35px;top:326.50px;font-size:13px;color:#000;letter-spacing:-0.055px;">July </span>
<span class="t" style="left:403.81px;top:326.50px;font-size:13px;color:#000;letter-spacing:-0.197px;">15, </span>
<span class="t" style="left:424.71px;top:326.50px;font-size:13px;color:#000;letter-spacing:-0.230px;">2017</span>
<span class="t" style="left:473.48px;top:326.50px;font-size:13px;color:#000;letter-spacing:-0.124px;">2:00 </span>
<span class="t" style="left:501.78px;top:326.50px;font-size:13px;color:#000;letter-spacing:0.610px;">PM</span>
<span class="t" style="left:633.50px;top:326.50px;font-size:13px;color:#000;letter-spacing:-0.234px;">423</span>
<span class="t" style="left:686.50px;top:326.50px;font-size:13px;color:#000;letter-spacing:-0.234px;">314</span>
<span class="t" style="left:750.50px;top:326.50px;font-size:13px;color:#000;letter-spacing:-0.205px;">$2,826.00</span>
<span class="t" style="left:866.50px;top:326.50px;font-size:13px;color:#000;letter-spacing:-0.234px;">109</span>
<span class="t" style="left:29.00px;top:346.50px;font-size:13px;color:#000;letter-spacing:-0.014px;">I </span>
<span class="t" style="left:36.21px;top:346.50px;font-size:13px;color:#000;letter-spacing:0.207px;">Hear </span>
<span class="t" style="left:69.04px;top:346.50px;font-size:13px;color:#000;letter-spacing:0.348px;">America </span>
<span class="t" style="left:123.12px;top:346.50px;font-size:13px;color:#000;letter-spacing:0.192px;">III</span>
<span class="t" style="left:148.00px;top:346.50px;font-size:13px;color:#000;letter-spacing:0.312px;">Appalachian </span>
<span class="t" style="left:226.92px;top:346.50px;font-size:13px;color:#000;letter-spacing:0.180px;">Spring</span>
<span class="t" style="left:316.00px;top:346.50px;font-size:13px;color:#000;letter-spacing:0.306px;">Saturday, </span>
<span class="t" style="left:377.35px;top:346.50px;font-size:13px;color:#000;letter-spacing:-0.055px;">July </span>
<span class="t" style="left:403.81px;top:346.50px;font-size:13px;color:#000;letter-spacing:-0.197px;">15, </span>
<span class="t" style="left:424.71px;top:346.50px;font-size:13px;color:#000;letter-spacing:-0.230px;">2017</span>
<span class="t" style="left:473.48px;top:346.50px;font-size:13px;color:#000;letter-spacing:-0.124px;">8:00 </span>
<span class="t" style="left:501.78px;top:346.50px;font-size:13px;color:#000;letter-spacing:0.610px;">PM</span>
<span class="t" style="left:633.50px;top:346.50px;font-size:13px;color:#000;letter-spacing:-0.234px;">407</span>
<span class="t" style="left:686.50px;top:346.50px;font-size:13px;color:#000;letter-spacing:-0.234px;">322</span>
<span class="t" style="left:750.50px;top:346.50px;font-size:13px;color:#000;letter-spacing:-0.205px;">$3,220.00</span>
<span class="t" style="left:873.50px;top:346.50px;font-size:13px;color:#000;letter-spacing:-0.234px;">85</span>
<span class="t" style="left:29.00px;top:366.50px;font-size:13px;color:#000;letter-spacing:-0.014px;">I </span>
<span class="t" style="left:36.21px;top:366.50px;font-size:13px;color:#000;letter-spacing:0.207px;">Hear </span>
<span class="t" style="left:69.04px;top:366.50px;font-size:13px;color:#000;letter-spacing:0.348px;">America </span>
<span class="t" style="left:123.12px;top:366.50px;font-size:13px;color:#000;letter-spacing:0.040px;">IV</span>
<span class="t" style="left:148.00px;top:366.50px;font-size:13px;color:#000;letter-spacing:0.461px;">New </span>
<span class="t" style="left:179.47px;top:366.50px;font-size:13px;color:#000;letter-spacing:0.134px;">England </span>
<span class="t" style="left:231.87px;top:366.50px;font-size:13px;color:#000;letter-spacing:0.297px;">Holidays</span>
<span class="t" style="left:316.00px;top:366.50px;font-size:13px;color:#000;letter-spacing:0.306px;">Saturday, </span>
<span class="t" style="left:377.35px;top:366.50px;font-size:13px;color:#000;letter-spacing:-0.055px;">July </span>
<span class="t" style="left:403.81px;top:366.50px;font-size:13px;color:#000;letter-spacing:-0.197px;">29, </span>
<span class="t" style="left:424.71px;top:366.50px;font-size:13px;color:#000;letter-spacing:-0.230px;">2017</span>
<span class="t" style="left:473.48px;top:366.50px;font-size:13px;color:#000;letter-spacing:-0.124px;">2:00 </span>
<span class="t" style="left:501.78px;top:366.50px;font-size:13px;color:#000;letter-spacing:0.610px;">PM</span>
<span class="t" style="left:633.50px;top:366.50px;font-size:13px;color:#000;letter-spacing:-0.234px;">423</span>
<span class="t" style="left:686.50px;top:366.50px;font-size:13px;color:#000;letter-spacing:-0.234px;">278</span>
<span class="t" style="left:750.50px;top:366.50px;font-size:13px;color:#000;letter-spacing:-0.205px;">$2,502.00</span>
<span class="t" style="left:866.50px;top:366.50px;font-size:13px;color:#000;letter-spacing:-0.234px;">145</span>
<span class="t" style="left:29.00px;top:386.50px;font-size:13px;color:#000;letter-spacing:-0.014px;">I </span>
<span class="t" style="left:36.21px;top:386.50px;font-size:13px;color:#000;letter-spacing:0.207px;">Hear </span>
<span class="t" style="left:69.04px;top:386.50px;font-size:13px;color:#000;letter-spacing:0.348px;">America </span>
<span class="t" style="left:123.12px;top:386.50px;font-size:13px;color:#000;letter-spacing:0.040px;">IV</span>
<span class="t" style="left:148.00px;top:386.50px;font-size:13px;color:#000;letter-spacing:0.461px;">New </span>
<span class="t" style="left:179.47px;top:386.50px;font-size:13px;color:#000;letter-spacing:0.134px;">England </span>
<span class="t" style="left:231.87px;top:386.50px;font-size:13px;color:#000;letter-spacing:0.297px;">Holidays</span>
<span class="t" style="left:316.00px;top:386.50px;font-size:13px;color:#000;letter-spacing:0.306px;">Saturday, </span>
<span class="t" style="left:377.35px;top:386.50px;font-size:13px;color:#000;letter-spacing:-0.055px;">July </span>
<span class="t" style="left:403.81px;top:386.50px;font-size:13px;color:#000;letter-spacing:-0.197px;">29, </span>
<span class="t" style="left:424.71px;top:386.50px;font-size:13px;color:#000;letter-spacing:-0.230px;">2017</span>
<span class="t" style="left:473.48px;top:386.50px;font-size:13px;color:#000;letter-spacing:-0.124px;">8:00 </span>
<span class="t" style="left:501.78px;top:386.50px;font-size:13px;color:#000;letter-spacing:0.610px;">PM</span>
<span class="t" style="left:633.50px;top:386.50px;font-size:13px;color:#000;letter-spacing:-0.234px;">407</span>
<span class="t" style="left:686.50px;top:386.50px;font-size:13px;color:#000;letter-spacing:-0.234px;">231</span>
<span class="t" style="left:750.50px;top:386.50px;font-size:13px;color:#000;letter-spacing:-0.205px;">$2,310.00</span>
<span class="t" style="left:866.50px;top:386.50px;font-size:13px;color:#000;letter-spacing:-0.234px;">176</span>
<span class="t" style="left:29.00px;top:406.50px;font-size:13px;color:#000;letter-spacing:-0.014px;">I </span>
<span class="t" style="left:36.21px;top:406.50px;font-size:13px;color:#000;letter-spacing:0.207px;">Hear </span>
<span class="t" style="left:69.04px;top:406.50px;font-size:13px;color:#000;letter-spacing:0.348px;">America </span>
<span class="t" style="left:123.12px;top:406.50px;font-size:13px;color:#000;letter-spacing:-0.100px;">V</span>
<span class="t" style="left:148.00px;top:406.50px;font-size:13px;color:#000;letter-spacing:0.260px;">Grand </span>
<span class="t" style="left:189.31px;top:406.50px;font-size:13px;color:#000;letter-spacing:0.135px;">Canyon </span>
<span class="t" style="left:238.68px;top:406.50px;font-size:13px;color:#000;letter-spacing:0.256px;">Suite</span>
<span class="t" style="left:316.00px;top:406.50px;font-size:13px;color:#000;letter-spacing:0.171px;">Sunday, </span>
<span class="t" style="left:367.73px;top:406.50px;font-size:13px;color:#000;letter-spacing:0.286px;">August </span>
<span class="t" style="left:413.82px;top:406.50px;font-size:13px;color:#000;letter-spacing:-0.197px;">13, </span>
<span class="t" style="left:434.72px;top:406.50px;font-size:13px;color:#000;letter-spacing:-0.230px;">2017</span>
<span class="t" style="left:473.48px;top:406.50px;font-size:13px;color:#000;letter-spacing:-0.124px;">2:00 </span>
<span class="t" style="left:501.78px;top:406.50px;font-size:13px;color:#000;letter-spacing:0.610px;">PM</span>
<span class="t" style="left:633.50px;top:406.50px;font-size:13px;color:#000;letter-spacing:-0.234px;">423</span>
<span class="t" style="left:686.50px;top:406.50px;font-size:13px;color:#000;letter-spacing:-0.234px;">327</span>
<span class="t" style="left:750.50px;top:406.50px;font-size:13px;color:#000;letter-spacing:-0.205px;">$2,943.00</span>
<span class="t" style="left:873.50px;top:406.50px;font-size:13px;color:#000;letter-spacing:-0.234px;">96</span>
<span class="t" style="left:29.00px;top:426.50px;font-size:13px;color:#000;letter-spacing:-0.014px;">I </span>
<span class="t" style="left:36.21px;top:426.50px;font-size:13px;color:#000;letter-spacing:0.207px;">Hear </span>
<span class="t" style="left:69.04px;top:426.50px;font-size:13px;color:#000;letter-spacing:0.348px;">America </span>
<span class="t" style="left:123.12px;top:426.50px;font-size:13px;color:#000;letter-spacing:-0.100px;">V</span>
<span class="t" style="left:148.00px;top:426.50px;font-size:13px;color:#000;letter-spacing:0.260px;">Grand </span>
<span class="t" style="left:189.31px;top:426.50px;font-size:13px;color:#000;letter-spacing:0.135px;">Canyon </span>
<span class="t" style="left:238.68px;top:426.50px;font-size:13px;color:#000;letter-spacing:0.256px;">Suite</span>
<span class="t" style="left:316.00px;top:426.50px;font-size:13px;color:#000;letter-spacing:0.171px;">Sunday, </span>
<span class="t" style="left:367.73px;top:426.50px;font-size:13px;color:#000;letter-spacing:0.286px;">August </span>
<span class="t" style="left:413.82px;top:426.50px;font-size:13px;color:#000;letter-spacing:-0.197px;">13, </span>
<span class="t" style="left:434.72px;top:426.50px;font-size:13px;color:#000;letter-spacing:-0.230px;">2017</span>
<span class="t" style="left:473.48px;top:426.50px;font-size:13px;color:#000;letter-spacing:-0.124px;">8:00 </span>
<span class="t" style="left:501.78px;top:426.50px;font-size:13px;color:#000;letter-spacing:0.610px;">PM</span>
<span class="t" style="left:633.50px;top:426.50px;font-size:13px;color:#000;letter-spacing:-0.234px;">407</span>
<span class="t" style="left:686.50px;top:426.50px;font-size:13px;color:#000;letter-spacing:-0.234px;">301</span>
<span class="t" style="left:750.50px;top:426.50px;font-size:13px;color:#000;letter-spacing:-0.205px;">$3,010.00</span>
<span class="t" style="left:866.50px;top:426.50px;font-size:13px;color:#000;letter-spacing:-0.234px;">106</span>
<span class="t" style="left:29.00px;top:446.50px;font-size:13px;color:#000;letter-spacing:-0.014px;">I </span>
<span class="t" style="left:36.21px;top:446.50px;font-size:13px;color:#000;letter-spacing:0.207px;">Hear </span>
<span class="t" style="left:69.04px;top:446.50px;font-size:13px;color:#000;letter-spacing:0.348px;">America </span>
<span class="t" style="left:123.12px;top:446.50px;font-size:13px;color:#000;letter-spacing:0.040px;">VI</span>
<span class="t" style="left:148.00px;top:446.50px;font-size:13px;color:#000;letter-spacing:0.461px;">New </span>
<span class="t" style="left:179.47px;top:446.50px;font-size:13px;color:#000;letter-spacing:0.199px;">Orleans </span>
<span class="t" style="left:230.20px;top:446.50px;font-size:13px;color:#000;letter-spacing:0.256px;">Suite</span>
<span class="t" style="left:316.00px;top:446.50px;font-size:13px;color:#000;letter-spacing:0.171px;">Sunday, </span>
<span class="t" style="left:367.73px;top:446.50px;font-size:13px;color:#000;letter-spacing:0.286px;">August </span>
<span class="t" style="left:413.82px;top:446.50px;font-size:13px;color:#000;letter-spacing:-0.197px;">27, </span>
<span class="t" style="left:434.72px;top:446.50px;font-size:13px;color:#000;letter-spacing:-0.230px;">2017</span>
<span class="t" style="left:473.48px;top:446.50px;font-size:13px;color:#000;letter-spacing:-0.124px;">2:00 </span>
<span class="t" style="left:501.78px;top:446.50px;font-size:13px;color:#000;letter-spacing:0.610px;">PM</span>
<span class="t" style="left:633.50px;top:446.50px;font-size:13px;color:#000;letter-spacing:-0.234px;">423</span>
<span class="t" style="left:686.50px;top:446.50px;font-size:13px;color:#000;letter-spacing:-0.234px;">295</span>
<span class="t" style="left:750.50px;top:446.50px;font-size:13px;color:#000;letter-spacing:-0.205px;">$2,655.00</span>
<span class="t" style="left:866.50px;top:446.50px;font-size:13px;color:#000;letter-spacing:-0.234px;">128</span>
<span class="t" style="left:29.00px;top:466.50px;font-size:13px;color:#000;letter-spacing:-0.014px;">I </span>
<span class="t" style="left:36.21px;top:466.50px;font-size:13px;color:#000;letter-spacing:0.207px;">Hear </span>
<span class="t" style="left:69.04px;top:466.50px;font-size:13px;color:#000;letter-spacing:0.348px;">America </span>
<span class="t" style="left:123.12px;top:466.50px;font-size:13px;color:#000;letter-spacing:0.040px;">VI</span>
<span class="t" style="left:148.00px;top:466.50px;font-size:13px;color:#000;letter-spacing:0.461px;">New </span>
<span class="t" style="left:179.47px;top:466.50px;font-size:13px;color:#000;letter-spacing:0.199px;">Orleans </span>
<span class="t" style="left:230.20px;top:466.50px;font-size:13px;color:#000;letter-spacing:0.256px;">Suite</span>
<span class="t" style="left:316.00px;top:466.50px;font-size:13px;color:#000;letter-spacing:0.171px;">Sunday, </span>
<span class="t" style="left:367.73px;top:466.50px;font-size:13px;color:#000;letter-spacing:0.286px;">August </span>
<span class="t" style="left:413.82px;top:466.50px;font-size:13px;color:#000;letter-spacing:-0.197px;">27, </span>
<span class="t" style="left:434.72px;top:466.50px;font-size:13px;color:#000;letter-spacing:-0.230px;">2017</span>
<span class="t" style="left:473.48px;top:466.50px;font-size:13px;color:#000;letter-spacing:-0.124px;">8:00 </span>
<span class="t" style="left:501.78px;top:466.50px;font-size:13px;color:#000;letter-spacing:0.610px;">PM</span>
<span class="t" style="left:633.50px;top:466.50px;font-size:13px;color:#000;letter-spacing:-0.234px;">407</span>
<span class="t" style="left:686.50px;top:466.50px;font-size:13px;color:#000;letter-spacing:-0.234px;">228</span>
<span class="t" style="left:750.50px;top:466.50px;font-size:13px;color:#000;letter-spacing:-0.205px;">$2,280.00</span>
<span class="t" style="left:866.50px;top:466.50px;font-size:13px;color:#000;letter-spacing:-0.234px;">179</span>
<span class="t" style="left:148.00px;top:546.50px;font-size:13px;color:#000;letter-spacing:0.313px;">Subscriptions</span>
<span class="t" style="left:148.00px;top:566.50px;font-size:13px;color:#000;letter-spacing:0.771px;">Matinee</span>
<span class="t" style="left:316.00px;top:566.50px;font-size:13px;color:#000;letter-spacing:0.486px;">Value</span>
<span class="t" style="left:148.00px;top:586.50px;font-size:13px;color:#000;letter-spacing:-0.234px;">42</span>
<span class="t" style="left:148.00px;top:606.50px;font-size:13px;color:#000;letter-spacing:0.169px;">Evening</span>
<span class="t" style="left:148.00px;top:626.50px;font-size:13px;color:#000;letter-spacing:-0.234px;">58</span>
<div class="a" style="left:296.5px;top:227px;width:16.5px;height:16.5px;background:#fcfcfc;border:1px solid #c0c0c0;box-sizing:border-box;"></div>
<svg class="a" style="left:301.5px;top:234.0px" width="7" height="4" viewBox="0 0 7 4"><path d="M0 0H7L3.5 4Z" fill="#777"/></svg>
<div class="a" style="left:453.5px;top:227px;width:16.5px;height:16.5px;background:#fcfcfc;border:1px solid #c0c0c0;box-sizing:border-box;"></div>
<svg class="a" style="left:458.5px;top:234.0px" width="7" height="4" viewBox="0 0 7 4"><path d="M0 0H7L3.5 4Z" fill="#777"/></svg>
<div class="a" style="left:508.5px;top:227px;width:16.5px;height:16.5px;background:#fcfcfc;border:1px solid #c0c0c0;box-sizing:border-box;"></div>
<svg class="a" style="left:513.5px;top:234.0px" width="7" height="4" viewBox="0 0 7 4"><path d="M0 0H7L3.5 4Z" fill="#777"/></svg>
<div class="a" style="left:640.5px;top:227px;width:16.5px;height:16.5px;background:#fcfcfc;border:1px solid #c0c0c0;box-sizing:border-box;"></div>
<svg class="a" style="left:645.5px;top:234.0px" width="7" height="4" viewBox="0 0 7 4"><path d="M0 0H7L3.5 4Z" fill="#777"/></svg>
<div class="a" style="left:693.5px;top:227px;width:16.5px;height:16.5px;background:#fcfcfc;border:1px solid #c0c0c0;box-sizing:border-box;"></div>
<svg class="a" style="left:698.5px;top:234.0px" width="7" height="4" viewBox="0 0 7 4"><path d="M0 0H7L3.5 4Z" fill="#777"/></svg>
<div class="a" style="left:792.5px;top:227px;width:16.5px;height:16.5px;background:#fcfcfc;border:1px solid #c0c0c0;box-sizing:border-box;"></div>
<svg class="a" style="left:797.5px;top:234.0px" width="7" height="4" viewBox="0 0 7 4"><path d="M0 0H7L3.5 4Z" fill="#777"/></svg>
<div class="a" style="left:873.5px;top:227px;width:16.5px;height:16.5px;background:#fcfcfc;border:1px solid #c0c0c0;box-sizing:border-box;"></div>
<svg class="a" style="left:878.5px;top:234.0px" width="7" height="4" viewBox="0 0 7 4"><path d="M0 0H7L3.5 4Z" fill="#777"/></svg>
<div class="a" style="left:656px;top:244.5px;width:55.5px;height:22px;border:2px solid #217346;box-sizing:border-box;"></div>
<div class="a" style="left:707px;top:262.5px;width:6.5px;height:6.5px;background:#217346;border:1px solid #fff;box-sizing:border-box;"></div>
<div class="a" style="left:1005px;top:206px;width:19px;height:475px;background:#e6e6e6;"></div>
<div class="a" style="left:1005.5px;top:240px;width:19px;height:426.5px;background:#d8d8d8;"></div>
<div class="a" style="left:1007px;top:208px;width:15px;height:15px;background:#fff;border:1px solid #ababab;box-sizing:border-box;"></div>
<svg class="a" style="left:1011.0px;top:213.0px" width="7" height="4" viewBox="0 0 7 4"><path d="M0 4H7L3.5 0Z" fill="#666"/></svg>
<div class="a" style="left:1007px;top:223px;width:15px;height:17px;background:#fff;border:1px solid #ababab;box-sizing:border-box;"></div>
<div class="a" style="left:1007px;top:666px;width:15px;height:14.5px;background:#fff;border:1px solid #ababab;box-sizing:border-box;"></div>
<svg class="a" style="left:1011.0px;top:672.0px" width="7" height="4" viewBox="0 0 7 4"><path d="M0 0H7L3.5 4Z" fill="#666"/></svg>
<div class="a" style="left:1px;top:680.2px;width:1004px;height:1px;background:#ababab;"></div>
<svg class="a" style="left:27px;top:689px" width="5" height="9" viewBox="0 0 5 9"><path d="M5 0V9L0 4.5Z" fill="#217346"/></svg>
<svg class="a" style="left:56.5px;top:689px" width="5" height="9" viewBox="0 0 5 9"><path d="M0 0V9L5 4.5Z" fill="#217346"/></svg>
<span class="t" style="left:81.90px;top:682.50px;font-size:13px;color:#217346;font-weight:bold;letter-spacing:0.119px;">...</span>
<div class="a" style="left:101px;top:684px;width:1px;height:20px;background:#ababab;"></div>
<span class="t" style="left:114.70px;top:683.50px;font-size:12px;color:#444;letter-spacing:0.234px;">Price List</span>
<div class="a" style="left:181px;top:682px;width:1px;height:24px;background:#ababab;"></div>
<div class="a" style="left:182px;top:680.5px;width:50px;height:23px;background:#fff;"></div>
<div class="a" style="left:182px;top:703.3px;width:50px;height:2px;background:#217346;"></div>
<span class="t" style="left:193.40px;top:683.50px;font-size:12px;color:#217346;font-weight:bold;letter-spacing:-0.032px;">Sales</span>
<div class="a" style="left:719px;top:687.5px;width:235px;height:14.5px;background:#fff;border:1px solid #c0c0c0;box-sizing:border-box;"></div>
<div class="a" style="left:954px;top:687.5px;width:35px;height:14.5px;background:#d6d6d6;"></div>
<div class="a" style="left:989px;top:687.5px;width:15px;height:14.5px;background:#fff;border:1px solid #b4b4b4;box-sizing:border-box;"></div>
<svg class="a" style="left:994.5px;top:691px" width="4" height="8" viewBox="0 0 4 8"><path d="M0 0V8L4 4Z" fill="#666"/></svg>
<span class="t" style="left:8.40px;top:709.00px;font-size:11.5px;color:#444;letter-spacing:-0.470px;">Ready</span>
<div class="a" style="left:733.5px;top:709px;width:37.5px;height:21px;background:#c6c6c6;"></div>
<span class="t" style="left:989.40px;top:709.00px;font-size:11.5px;color:#444;letter-spacing:-0.605px;">100%</span>
<div class="a" style="left:862.5px;top:718px;width:98.5px;height:1px;background:#a0a0a0;"></div>
<div class="a" style="left:910px;top:713px;width:4px;height:11px;background:#666;"></div>
<div class="a" style="left:852px;top:717.6px;width:6px;height:2px;background:#555;"></div>
<div class="a" style="left:966px;top:717.6px;width:8.5px;height:2px;background:#555;"></div>
<div class="a" style="left:969.3px;top:714.4px;width:2px;height:8.5px;background:#555;"></div>
<div class="a" style="left:49px;top:730px;width:176px;height:40px;background:#3b3b3b;"></div>
<span class="t" style="left:88.70px;top:740.00px;font-size:15px;color:#a6a6a6;letter-spacing:-0.194px;">I'm Cortana. Ask me</span>
<svg class="a" style="left:57px;top:739px" width="24" height="24" viewBox="0 0 24 24"><circle cx="12" cy="11.6" r="9.7" fill="none" stroke="#fff" stroke-width="2.6"/></svg>
<svg class="a" style="left:17px;top:742px" width="16" height="16" viewBox="0 0 16 16"><path d="M0 2.2L6.6 1.3V7.6H0ZM7.4 1.2L16 0V7.6H7.4ZM0 8.4H6.6V14.7L0 13.8ZM7.4 8.4H16V16L7.4 14.8Z" fill="#fff"/></svg>
<span class="t" style="left:961.70px;top:730.70px;font-size:12px;color:#fff;letter-spacing:-0.459px;">10:07 PM</span>
<span class="t" style="left:959.20px;top:747.30px;font-size:12px;color:#fff;letter-spacing:-0.110px;">10/3/2016</span>
<svg class="a" style="left:895.5px;top:745.8px" width="13" height="8" viewBox="0 0 13 8"><path d="M1 7L6.5 1.5L12 7" stroke="#fff" stroke-width="1.3" fill="none"/></svg>
<svg class="a" style="left:925.5px;top:741.3px" width="18" height="17" viewBox="0 0 18 17"><path d="M9 12.6H1V1H16.4V8" stroke="#fff" stroke-width="1.2" fill="none"/><path d="M3.4 4.2H14M3.4 6.8H14M3.4 9.4H8.6" stroke="#fff" stroke-width="1.1"/><circle cx="12.6" cy="12.2" r="3.7" fill="#000" stroke="#fff" stroke-width="1.2"/><path d="M10.6 12.2H14.6" stroke="#fff" stroke-width="1.1"/></svg>
<svg class="a" style="left:23px;top:12px" width="14" height="14" viewBox="0 0 14 14"><rect x="0" y="0" width="14" height="14" fill="#fff"/><rect x="2.3" y="1.5" width="9.4" height="4.6" fill="#217346"/><rect x="3" y="9.2" width="7.6" height="3.5" fill="#217346"/><rect x="5.4" y="10.8" width="2.6" height="1.9" fill="#fff"/></svg>
<svg class="a" style="left:51px;top:11px" width="17" height="15" viewBox="0 0 17 15"><path d="M7 2L2.2 6.3L8 8.6" fill="none" stroke="#fff" stroke-width="2" stroke-linejoin="miter"/><path d="M3 6.2C8 4.2 14.5 5.5 14 10C13.7 12.5 11.5 13.6 9 13.3" fill="none" stroke="#fff" stroke-width="2"/></svg>
<svg class="a" style="left:72.0px;top:17.0px" width="5" height="3" viewBox="0 0 5 3"><path d="M0 0H5L2.5 3Z" fill="#fff"/></svg>
<svg class="a" style="left:86px;top:11px" width="17" height="15" viewBox="0 0 17 15"><g transform="translate(17,0) scale(-1,1)"><path d="M7 2L2.2 6.3L8 8.6" fill="none" stroke="#fff" stroke-width="2"/><path d="M3 6.2C8 4.2 14.5 5.5 14 10C13.7 12.5 11.5 13.6 9 13.3" fill="none" stroke="#fff" stroke-width="2"/></g></svg>
<svg class="a" style="left:107.0px;top:17.0px" width="5" height="3" viewBox="0 0 5 3"><path d="M0 0H5L2.5 3Z" fill="#fff"/></svg>
<div class="a" style="left:125.5px;top:15.5px;width:6px;height:1.2px;background:#fff;"></div>
<svg class="a" style="left:125.5px;top:18.0px" width="6" height="3" viewBox="0 0 6 3"><path d="M0 0H6L3.0 3Z" fill="#fff"/></svg>
<svg class="a" style="left:857px;top:12px" width="14" height="11" viewBox="0 0 14 11"><path d="M.6 .6H12.6V9.6H.6Z" fill="none" stroke="#fff" stroke-width="1.1"/><path d="M.6 2.8H12.6" stroke="#fff" stroke-width="1"/><path d="M6.6 8.5V4.6M4.6 6.4L6.6 4.4L8.6 6.4" fill="none" stroke="#fff" stroke-width="1.1"/></svg>
<div class="a" style="left:905px;top:17px;width:10.5px;height:1.2px;background:#fff;"></div>
<svg class="a" style="left:951px;top:12px" width="11" height="11" viewBox="0 0 11 11"><path d="M.6 2.8H7.8V10H.6Z" fill="none" stroke="#fff" stroke-width="1.1"/><path d="M2.8 2.8V.6H10V7.8H7.8" fill="none" stroke="#fff" stroke-width="1.1"/></svg>
<svg class="a" style="left:997px;top:12.5px" width="11" height="11" viewBox="0 0 11 11"><path d="M.5 .5L10 10M10 .5L.5 10" stroke="#fff" stroke-width="1.2" fill="none"/></svg>
<svg class="a" style="left:540.6px;top:44px" width="11" height="15" viewBox="0 0 11 15"><path d="M5.5 1C2.9 1 1.2 2.9 1.2 5C1.2 6.6 2.2 7.4 3 8.6C3.4 9.2 3.5 9.8 3.5 10.4H7.5C7.5 9.8 7.6 9.2 8 8.6C8.8 7.4 9.8 6.6 9.8 5C9.8 2.9 8.1 1 5.5 1Z" fill="none" stroke="#fff" stroke-width="1.1"/><path d="M3.8 12H7.2M4.2 13.6H6.8" stroke="#fff" stroke-width="1.1"/></svg>
<svg class="a" style="left:953px;top:44px" width="16" height="16" viewBox="0 0 16 16"><circle cx="7.2" cy="5" r="3.6" fill="none" stroke="#fff" stroke-width="1.4"/><path d="M1 14.5C1.2 11 3.5 9.2 6 8.8" fill="none" stroke="#fff" stroke-width="1.4"/><path d="M11.5 8.5V15M8.2 11.8H14.8" stroke="#fff" stroke-width="1.5"/></svg>
<svg class="a" style="left:13px;top:73px" width="31" height="34" viewBox="0 0 31 34"><path d="M1.5 5.5H24.5V30H1.5Z" fill="#ebc576"/><path d="M6 5.2H9.8V3.6C9.8 1 16.2 1 16.2 3.6V5.2H20V9H6Z" fill="#6b6b6b"/><circle cx="13" cy="3.6" r="1.1" fill="#f1f1f1"/><path d="M15.5 13.5H24L28.5 18V31.5H15.5Z" fill="#fff" stroke="#6b6b6b" stroke-width="1.1"/><path d="M24 13.5V18H28.5" fill="none" stroke="#6b6b6b" stroke-width="1.1"/></svg>
<svg class="a" style="left:50px;top:73px" width="16" height="16" viewBox="0 0 16 16"><path d="M4 .8L10.8 10.2M12 .8L5.2 10.2" stroke="#5f5f5f" stroke-width="1.7" fill="none"/><circle cx="3.6" cy="12.2" r="2.3" fill="none" stroke="#4c7fb5" stroke-width="1.4"/><circle cx="12.4" cy="12.2" r="2.3" fill="none" stroke="#4c7fb5" stroke-width="1.4"/></svg>
<svg class="a" style="left:49px;top:96px" width="18" height="16" viewBox="0 0 18 16"><path d="M1.5 1.5H6L8 3.5V11H1.5Z" fill="#fff" stroke="#6b6b6b" stroke-width="1"/><path d="M3 4.5H6M3 6.5H6M3 8.5H6" stroke="#6b6b6b" stroke-width=".9"/><path d="M7.5 4.5H13L16 7.5V14.5H7.5Z" fill="#fff" stroke="#6b6b6b" stroke-width="1"/><path d="M9.5 8.5H14M9.5 10.5H14M9.5 12.5H14" stroke="#6b6b6b" stroke-width=".9"/></svg>
<svg class="a" style="left:50px;top:118px" width="18" height="17" viewBox="0 0 18 17"><path d="M11.5 5L15 1.5L17 3.5L13.5 7Z" fill="#6b6b6b"/><path d="M8 5L13.5 10.5L11.5 12.5L6 7Z" fill="#6b6b6b"/><path d="M5.5 7.5L11 13L7.5 16L1 10.5Z" fill="#ebc576"/></svg>
<span class="t" style="left:251.40px;top:79.80px;font-size:12.8px;color:#555;letter-spacing:0.853px;">A</span>
<svg class="a" style="left:259px;top:81.5px" width="6" height="4" viewBox="0 0 6 4"><path d="M0 4H6L3 0Z" fill="#6c88a8"/></svg>
<span class="t" style="left:274.10px;top:80.70px;font-size:10.4px;color:#555;letter-spacing:0.462px;">A</span>
<svg class="a" style="left:281px;top:81.5px" width="6" height="4" viewBox="0 0 6 4"><path d="M0 0H6L3 4Z" fill="#6c88a8"/></svg>
<svg class="a" style="left:182px;top:113px" width="14" height="14" viewBox="0 0 14 14"><rect x="0" y="0" width="1" height="1" fill="#5a5a5a"/><rect x="6" y="0" width="1" height="1" fill="#5a5a5a"/><rect x="12" y="0" width="1" height="1" fill="#5a5a5a"/><rect x="0" y="0" width="1" height="1" fill="#5a5a5a"/><rect x="0" y="6" width="1" height="1" fill="#5a5a5a"/><rect x="0" y="2" width="1" height="1" fill="#5a5a5a"/><rect x="6" y="2" width="1" height="1" fill="#5a5a5a"/><rect x="12" y="2" width="1" height="1" fill="#5a5a5a"/><rect x="2" y="0" width="1" height="1" fill="#5a5a5a"/><rect x="2" y="6" width="1" height="1" fill="#5a5a5a"/><rect x="0" y="4" width="1" height="1" fill="#5a5a5a"/><rect x="6" y="4" width="1" height="1" fill="#5a5a5a"/><rect x="12" y="4" width="1" height="1" fill="#5a5a5a"/><rect x="4" y="0" width="1" height="1" fill="#5a5a5a"/><rect x="4" y="6" width="1" height="1" fill="#5a5a5a"/><rect x="0" y="6" width="1" height="1" fill="#5a5a5a"/><rect x="6" y="6" width="1" height="1" fill="#5a5a5a"/><rect x="12" y="6" width="1" height="1" fill="#5a5a5a"/><rect x="6" y="0" width="1" height="1" fill="#5a5a5a"/><rect x="6" y="6" width="1" height="1" fill="#5a5a5a"/><rect x="0" y="8" width="1" height="1" fill="#5a5a5a"/><rect x="6" y="8" width="1" height="1" fill="#5a5a5a"/><rect x="12" y="8" width="1" height="1" fill="#5a5a5a"/><rect x="8" y="0" width="1" height="1" fill="#5a5a5a"/><rect x="8" y="6" width="1" height="1" fill="#5a5a5a"/><rect x="0" y="10" width="1" height="1" fill="#5a5a5a"/><rect x="6" y="10" width="1" height="1" fill="#5a5a5a"/><rect x="12" y="10" width="1" height="1" fill="#5a5a5a"/><rect x="10" y="0" width="1" height="1" fill="#5a5a5a"/><rect x="10" y="6" width="1" height="1" fill="#5a5a5a"/><rect x="0" y="12" width="1" height="1" fill="#5a5a5a"/><rect x="6" y="12" width="1" height="1" fill="#5a5a5a"/><rect x="12" y="12" width="1" height="1" fill="#5a5a5a"/><rect x="12" y="0" width="1" height="1" fill="#5a5a5a"/><rect x="12" y="6" width="1" height="1" fill="#5a5a5a"/><rect x="0" y="12" width="14" height="1.4" fill="#555"/></svg>
<svg class="a" style="left:224px;top:111px" width="17" height="17" viewBox="0 0 17 17"><path d="M7.8 2.8L13.6 8.2L7.6 12.6L2 7.4Z" fill="#fff" stroke="#555" stroke-width="1.1"/><path d="M7.2 5.6V2C7.2 .5 9.4 .5 9.4 2V4" fill="none" stroke="#555" stroke-width="1"/><path d="M12.4 5.6C15 5.4 16.4 7.6 16 10.4C15.2 9.2 14.2 8.8 13.4 9Z" fill="#4c7fb5"/><rect x="0" y="13.2" width="16" height="3.6" fill="#f7e62b"/></svg>
<span class="t" style="left:261.20px;top:109.00px;font-size:13px;color:#555;letter-spacing:1.228px;">A</span>
<div class="a" style="left:258px;top:124.2px;width:16px;height:3.6px;background:#e21b1b;"></div>
<div class="a" style="left:302px;top:80.7px;width:14px;height:1.1px;background:#666;"></div>
<div class="a" style="left:302px;top:83.7px;width:14px;height:1.1px;background:#666;"></div>
<div class="a" style="left:302px;top:86.7px;width:14px;height:1.1px;background:#666;"></div>
<div class="a" style="left:324px;top:85.2px;width:14px;height:1.1px;background:#666;"></div>
<div class="a" style="left:324px;top:88.2px;width:14px;height:1.1px;background:#666;"></div>
<div class="a" style="left:324px;top:91.2px;width:14px;height:1.1px;background:#666;"></div>
<div class="a" style="left:346px;top:90.2px;width:14px;height:1.1px;background:#666;"></div>
<div class="a" style="left:346px;top:93.2px;width:14px;height:1.1px;background:#666;"></div>
<div class="a" style="left:346px;top:96.2px;width:14px;height:1.1px;background:#666;"></div>
<div class="a" style="left:302px;top:115.2px;width:14px;height:1.1px;background:#666;"></div>
<div class="a" style="left:302px;top:118.2px;width:10px;height:1.1px;background:#666;"></div>
<div class="a" style="left:302px;top:121.2px;width:14px;height:1.1px;background:#666;"></div>
<div class="a" style="left:302px;top:124.2px;width:10px;height:1.1px;background:#666;"></div>
<div class="a" style="left:324.0px;top:115.2px;width:14px;height:1.1px;background:#666;"></div>
<div class="a" style="left:326.5px;top:118.2px;width:9px;height:1.1px;background:#666;"></div>
<div class="a" style="left:324.0px;top:121.2px;width:14px;height:1.1px;background:#666;"></div>
<div class="a" style="left:326.5px;top:124.2px;width:9px;height:1.1px;background:#666;"></div>
<div class="a" style="left:346px;top:115.2px;width:14px;height:1.1px;background:#666;"></div>
<div class="a" style="left:350px;top:118.2px;width:10px;height:1.1px;background:#666;"></div>
<div class="a" style="left:346px;top:121.2px;width:14px;height:1.1px;background:#666;"></div>
<div class="a" style="left:350px;top:124.2px;width:10px;height:1.1px;background:#666;"></div>
<div class="a" style="left:369.7px;top:113px;width:16.5px;height:1.1px;background:#666;"></div>
<div class="a" style="left:369.7px;top:125px;width:16.5px;height:1.1px;background:#666;"></div>
<div class="a" style="left:379.2px;top:116px;width:7px;height:1.1px;background:#666;"></div>
<div class="a" style="left:379.2px;top:119px;width:7px;height:1.1px;background:#666;"></div>
<div class="a" style="left:379.2px;top:122px;width:7px;height:1.1px;background:#666;"></div>
<svg class="a" style="left:369.7px;top:115.5px" width="9" height="8" viewBox="0 0 9 8"><path d="M2 4H8.5" stroke="#3f72ad" stroke-width="1.7"/><path d="M4.5 .8L1 4L4.5 7.2" fill="none" stroke="#3f72ad" stroke-width="1.6"/></svg>
<div class="a" style="left:391.7px;top:113px;width:16.5px;height:1.1px;background:#666;"></div>
<div class="a" style="left:391.7px;top:125px;width:16.5px;height:1.1px;background:#666;"></div>
<div class="a" style="left:401.2px;top:116px;width:7px;height:1.1px;background:#666;"></div>
<div class="a" style="left:401.2px;top:119px;width:7px;height:1.1px;background:#666;"></div>
<div class="a" style="left:401.2px;top:122px;width:7px;height:1.1px;background:#666;"></div>
<svg class="a" style="left:391.7px;top:115.5px" width="9" height="8" viewBox="0 0 9 8"><path d="M0 4H6.5" stroke="#3f72ad" stroke-width="1.7"/><path d="M4.5 .8L8 4L4.5 7.2" fill="none" stroke="#3f72ad" stroke-width="1.6"/></svg>
<span class="t" style="left:367.8px;top:76.8px;font-size:12.5px;color:#444;transform:rotate(-47deg);transform-origin:50% 50%;letter-spacing:-.5px">ab</span>
<svg class="a" style="left:374px;top:83px" width="14" height="14" viewBox="0 0 14 14"><path d="M2.6 12L11 3.8" stroke="#444" stroke-width="1.3" fill="none"/><path d="M7.8 3.2L11.8 3L11.6 7" fill="none" stroke="#444" stroke-width="1.1"/></svg>
<svg class="a" style="left:422px;top:80px" width="19" height="17" viewBox="0 0 19 17"><path d="M1.5 1.5H10.5V5.5H1.5Z" fill="none" stroke="#666" stroke-width="1"/><path d="M3 3.5H9" stroke="#666" stroke-width="1"/><path d="M1.5 8.5H10.5V15.5H1.5Z" fill="none" stroke="#666" stroke-width="1"/><path d="M3 10.5H9M3 13H9" stroke="#666" stroke-width="1"/><path d="M11 3.5H14.5C17.5 3.5 17.5 10.5 14.5 10.5H12.5" fill="none" stroke="#3f72ad" stroke-width="1.1"/><path d="M14.2 8.3L12 10.5L14.2 12.7" fill="none" stroke="#3f72ad" stroke-width="1.1"/></svg>
<svg class="a" style="left:422.5px;top:111.5px" width="16" height="16" viewBox="0 0 16 16"><path d="M.8 .8H15.2V15.2H.8Z" fill="#fff" stroke="#666" stroke-width="1.1"/><path d="M.8 4.4H15.2M.8 11.6H15.2M8 .8V4.4M8 11.6V15.2" stroke="#666" stroke-width="1.1"/><path d="M3.2 8H12.8" stroke="#555" stroke-width="1"/><path d="M5 6.2L3.2 8L5 9.8M11 6.2L12.8 8L11 9.8" fill="none" stroke="#555" stroke-width="1"/></svg>
<span class="t" style="left:561.30px;top:106.30px;font-size:8.5px;color:#444;letter-spacing:-0.097px;">.0</span>
<span class="t" style="left:556.40px;top:113.20px;font-size:8.5px;color:#444;letter-spacing:-0.009px;">.00</span>
<svg class="a" style="left:554px;top:113.5px" width="8" height="6" viewBox="0 0 8 6"><path d="M1 3H7.5" stroke="#3f72ad" stroke-width="1.2"/><path d="M3.4 .6L1 3L3.4 5.4" fill="none" stroke="#3f72ad" stroke-width="1.2"/></svg>
<span class="t" style="left:578.60px;top:106.30px;font-size:8.5px;color:#444;letter-spacing:-0.009px;">.00</span>
<span class="t" style="left:583.60px;top:113.20px;font-size:8.5px;color:#444;letter-spacing:-0.147px;">.0</span>
<svg class="a" style="left:576px;top:120.5px" width="8" height="6" viewBox="0 0 8 6"><path d="M.5 3H7" stroke="#3f72ad" stroke-width="1.2"/><path d="M4.6 .6L7 3L4.6 5.4" fill="none" stroke="#3f72ad" stroke-width="1.2"/></svg>
<svg class="a" style="left:607px;top:72px" width="18" height="18" viewBox="0 0 18 18"><rect x="1" y="1" width="13" height="12" fill="#fff" stroke="#7a7a7a" stroke-width="1"/><rect x="1.5" y="1.5" width="4" height="3.5" fill="#c8504a"/><rect x="5.5" y="1.5" width="4" height="3.5" fill="#c8504a"/><rect x="1.5" y="5" width="4" height="3.5" fill="#5b85ad"/><rect x="1.5" y="8.5" width="4" height="4" fill="#c8504a"/><path d="M5.5 1V13M9.5 1V13M1 5H14M1 8.5H14" stroke="#9a9a9a" stroke-width=".7"/><rect x="7.5" y="8" width="9.5" height="9" fill="#fff" stroke="#666" stroke-width="1.1"/><path d="M9.6 11.3H15M9.6 13.7H15M13.6 9.8L11 15.2" stroke="#444" stroke-width="1"/></svg>
<svg class="a" style="left:607px;top:95px" width="18" height="17" viewBox="0 0 18 17"><rect x="1" y="1" width="15" height="12.5" fill="#fff" stroke="#7a7a7a" stroke-width="1.1"/><rect x="1.5" y="1.5" width="14" height="3" fill="#e4e4e4"/><rect x="5" y="4.5" width="10.5" height="6" fill="#b9c9dc"/><path d="M5 1V13.5M8.7 1V13.5M12.4 1V13.5M1 4.5H16M1 7.5H16M1 10.5H16" stroke="#8a8a8a" stroke-width=".8"/><path d="M17.6 1.6L9.6 10.4L11.6 12.2L17.8 6Z" fill="#5f5f5f" stroke="#f1f1f1" stroke-width=".8"/><path d="M9.4 10.2L11.8 12.4C11.8 15.4 8.4 16.8 4.6 16.6C6.6 15.4 6.4 11.2 9.4 10.2Z" fill="#3f72ad" stroke="#f1f1f1" stroke-width=".6"/></svg>
<svg class="a" style="left:607px;top:118.5px" width="18" height="17" viewBox="0 0 18 17"><rect x="1" y="1" width="15" height="12.5" fill="#fff" stroke="#7a7a7a" stroke-width="1.1"/><rect x="4.5" y="4.5" width="11" height="6.5" fill="#b9c9dc"/><path d="M4.5 1V13.5M1 4.5H16M1 11H16" stroke="#8a8a8a" stroke-width=".9"/><path d="M17.6 1.6L9.6 10.4L11.6 12.2L17.8 6Z" fill="#5f5f5f" stroke="#f1f1f1" stroke-width=".8"/><path d="M9.4 10.2L11.8 12.4C11.8 15.4 8.4 16.8 4.6 16.6C6.6 15.4 6.4 11.2 9.4 10.2Z" fill="#3f72ad" stroke="#f1f1f1" stroke-width=".6"/></svg>
<svg class="a" style="left:777px;top:72.5px" width="17" height="17" viewBox="0 0 17 17"><path d="M.6 .6H8.6V4.6H.6ZM4.6 .6V4.6" fill="#fff" stroke="#6a6a6a" stroke-width="1.1"/><path d="M.6 9.6H8.6V15.6H.6ZM4.6 9.6V15.6M.6 12.6H8.6" fill="#fff" stroke="#6a6a6a" stroke-width="1.1"/><path d="M7.8 5.6H15.6V8.6H7.8ZM11.7 5.6V8.6" fill="#d8d8d8" stroke="#7d7d7d" stroke-width="1"/><path d="M1.2 7.1H6.5" stroke="#3f72ad" stroke-width="1.5"/><path d="M3.6 4.8L1.2 7.1L3.6 9.4" fill="none" stroke="#3f72ad" stroke-width="1.4"/></svg>
<svg class="a" style="left:777px;top:96px" width="17" height="16" viewBox="0 0 17 16"><path d="M.6 .6H8.6V4.2H.6ZM4.6 .6V4.2" fill="#fff" stroke="#6a6a6a" stroke-width="1.1"/><path d="M.6 9.6H8.6V15.2H.6ZM4.6 9.6V15.2M.6 12.4H8.6" fill="#fff" stroke="#6a6a6a" stroke-width="1.1"/><path d="M3.6 5.4H8V8.4H3.6Z" fill="#d8d8d8" stroke="#7d7d7d" stroke-width="1"/><path d="M9 3.8L15.4 10.6M15.4 3.8L9 10.6" stroke="#e0623c" stroke-width="1.5"/></svg>
<svg class="a" style="left:777px;top:119px" width="16" height="16" viewBox="0 0 16 16"><path d="M1 .2V3.4M14 .2V3.4" stroke="#3f72ad" stroke-width="1"/><path d="M2 1.8H13" stroke="#3f72ad" stroke-width="1"/><path d="M3.8 .4L2 1.8L3.8 3.2M11.2 .4L13 1.8L11.2 3.2" fill="none" stroke="#3f72ad" stroke-width=".9"/><rect x=".6" y="4.6" width="14" height="10.6" fill="#fff" stroke="#6a6a6a" stroke-width="1.1"/><rect x="4.3" y="7.6" width="4" height="4" fill="#2f6a8e"/><path d="M4.3 4.6V15.2M8.3 4.6V15.2M11.6 4.6V15.2M.6 7.6H14.6M.6 11.6H14.6" stroke="#7d7d7d" stroke-width=".8"/></svg>
<svg class="a" style="left:860px;top:72.5px" width="17" height="16" viewBox="0 0 17 16"><path d="M15 3.4V1H1.6L8.4 8L1.6 15H15V12.4" fill="none" stroke="#444" stroke-width="2" stroke-linejoin="miter"/></svg>
<svg class="a" style="left:861px;top:95.5px" width="16" height="17" viewBox="0 0 16 17"><rect x=".6" y=".6" width="14.4" height="15" fill="#fff" stroke="#777" stroke-width="1.1"/><rect x=".6" y=".6" width="14.4" height="3.4" fill="#6e6e6e"/><path d="M7.8 5.6V12.4" stroke="#2f6f9f" stroke-width="1.8"/><path d="M4.4 9.4L7.8 12.8L11.2 9.4" fill="none" stroke="#2f6f9f" stroke-width="1.7"/></svg>
<svg class="a" style="left:860px;top:119.5px" width="16" height="14" viewBox="0 0 16 14"><path d="M9.4 1.2L14.6 5.6L7.6 12.6H4.4L1.4 9.8Z" fill="#ee8a93"/><path d="M1.4 9.8L4.2 7L8.8 11.4L7.6 12.6H4.4Z" fill="#f5b5ba"/></svg>
<span class="t" style="left:900.20px;top:72.80px;font-size:15px;color:#3f72ad;font-weight:bold;letter-spacing:-0.944px;">A</span>
<span class="t" style="left:900.90px;top:85.80px;font-size:15px;color:#a55fa8;font-weight:bold;letter-spacing:-0.472px;">Z</span>
<svg class="a" style="left:911px;top:82px" width="18" height="17" viewBox="0 0 18 17"><path d="M.6 1H17.2L11 7.6V15.4L7 13V7.6Z" fill="#7a7a7a"/><path d="M8.4 8.2H9.8V13.2L8.4 12.4Z" fill="#f1f1f1"/></svg>
<svg class="a" style="left:942px;top:74px" width="30" height="29" viewBox="0 0 30 29"><circle cx="18.6" cy="10.4" r="8.6" fill="#fcfdff" stroke="#3f72ad" stroke-width="1.9"/><path d="M12.2 16.8L2.4 26.2" stroke="#3f72ad" stroke-width="3.2" stroke-linecap="round"/></svg>
<svg class="a" style="left:1006px;top:147px" width="10" height="7" viewBox="0 0 10 7"><path d="M1 6L5 2L9 6" fill="none" stroke="#555" stroke-width="1.6"/></svg>
<svg class="a" style="left:744.5px;top:711.5px" width="14" height="14" viewBox="0 0 14 14"><path d="M1 1H13V13H1ZM5 1V13M9 1V13M1 5H13M1 9H13" fill="#eee" stroke="#5a5a5a" stroke-width="1.2"/></svg>
<svg class="a" style="left:783px;top:711.5px" width="14" height="14" viewBox="0 0 14 14"><path d="M.6 .6H13.4V13.4H.6Z" fill="none" stroke="#5a5a5a" stroke-width="1.1"/><path d="M3.6 3.2H10.4V10.8H3.6Z" fill="none" stroke="#5a5a5a" stroke-width="1"/><path d="M5 5.4H9M5 7H9M5 8.6H9" stroke="#5a5a5a" stroke-width=".9"/></svg>
<svg class="a" style="left:821px;top:711.5px" width="15" height="14" viewBox="0 0 15 14"><path d="M.6 .6H14V13.4H.6Z" fill="none" stroke="#5a5a5a" stroke-width="1.1"/><path d="M4.6 .6V7.4M.6 7.4H9V.6" fill="none" stroke="#5a5a5a" stroke-width="1"/></svg>
<svg class="a" style="left:59px;top:712px" width="14" height="14" viewBox="0 0 14 14"><rect x="2.6" y="3.6" width="10" height="9" fill="#fff" stroke="#777" stroke-width="1"/><path d="M4.5 6.5H11M4.5 8.5H11M4.5 10.5H11M6.5 5.5V11.5M9 5.5V11.5" stroke="#888" stroke-width=".8"/><circle cx="3.4" cy="3.4" r="2.6" fill="#777"/></svg>
<svg class="a" style="left:75px;top:148px" width="8" height="8" viewBox="0 0 8 8"><path d="M.6 5.6V.6H5.6" fill="none" stroke="#666" stroke-width="1.2"/><path d="M3 3L6.6 6.6" stroke="#666" stroke-width="1.1"/><path d="M7.4 3.6V7.4H3.6Z" fill="#666"/></svg>
<svg class="a" style="left:282.5px;top:148px" width="8" height="8" viewBox="0 0 8 8"><path d="M.6 5.6V.6H5.6" fill="none" stroke="#666" stroke-width="1.2"/><path d="M3 3L6.6 6.6" stroke="#666" stroke-width="1.1"/><path d="M7.4 3.6V7.4H3.6Z" fill="#666"/></svg>
<svg class="a" style="left:447.5px;top:148px" width="8" height="8" viewBox="0 0 8 8"><path d="M.6 5.6V.6H5.6" fill="none" stroke="#666" stroke-width="1.2"/><path d="M3 3L6.6 6.6" stroke="#666" stroke-width="1.1"/><path d="M7.4 3.6V7.4H3.6Z" fill="#666"/></svg>
<svg class="a" style="left:587.5px;top:148px" width="8" height="8" viewBox="0 0 8 8"><path d="M.6 5.6V.6H5.6" fill="none" stroke="#666" stroke-width="1.2"/><path d="M3 3L6.6 6.6" stroke="#666" stroke-width="1.1"/><path d="M7.4 3.6V7.4H3.6Z" fill="#666"/></svg>
<div class="a" style="left:224px;top:657.5px;width:496px;height:110.5px;background:#fff;border-radius:6px;box-shadow:0 0 3px 1px rgba(0,0,0,.45);overflow:hidden"><div class="a" style="left:0;top:0;width:496px;height:30px;background:#179fc9"></div></div>
<span class="t" style="left:396.90px;top:666.00px;font-size:19px;color:#fff;font-weight:bold;letter-spacing:-0.265px;">Task Instructions</span>
<span class="t" style="left:235.90px;top:693.20px;font-size:12.5px;color:#333;letter-spacing:0.376px;">Add the comment "Update" to the selected cell.</span>
</body></html>
